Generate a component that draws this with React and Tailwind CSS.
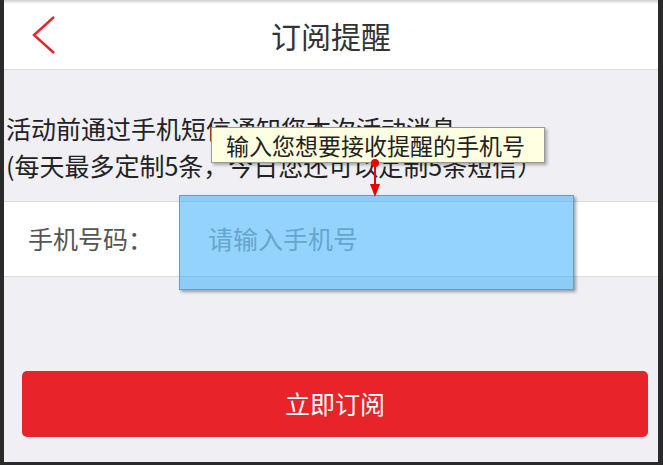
import React from 'react';

const cjk = { fontFamily: '"Noto Sans CJK SC", "Noto Sans", sans-serif' };

const App = () => {
  return (
    <div className="relative w-[663px] h-[465px] overflow-hidden bg-[#2a2a2a] pl-[4px] pr-[5px] pb-[3px]" style={cjk}>
      <div className="h-full flex flex-col bg-[#efeff4]">
        {/* header */}
        <div className="relative h-[70px] shrink-0 bg-white border-b border-[#dcdcdc] flex items-center">
          <div className="absolute top-0 left-0 right-0 h-[4px] bg-gradient-to-b from-[#cfcfcf] to-white" />
          <div className="w-[80px] pl-[27px] flex items-center">
            <svg width="26" height="40" viewBox="0 0 26 40">
              <path d="M23 2 L3 20 L23 38" fill="none" stroke="#e8232a" strokeWidth="2.4" />
            </svg>
          </div>
          <div className="flex-1 text-center text-[30px] text-[#333] leading-none">订阅提醒</div>
          <div className="w-[80px]" />
        </div>

        {/* notice */}
        <div className="pt-[40px] pl-[2px] text-[25px] leading-[37px] text-[#222] whitespace-nowrap">
          <div>活动前通过手机短信通知您本次活动消息</div>
          <div>(每天最多定制5条，今日您还可以定制5条短信）</div>
        </div>

        {/* phone row */}
        <div className="mt-[17px] h-[76px] shrink-0 bg-white border-y border-[#dcdcdc] flex items-center">
          <div className="w-[200px] pl-[24px] text-[25px] text-[#555]">手机号码：</div>
          <div className="pl-[4px] text-[25px] text-[#999]">请输入手机号</div>
        </div>

        {/* button */}
        <div className="mt-[94px] ml-[18px] w-[626px] h-[66px] rounded-[5px] bg-[#e8232a] flex items-center justify-center text-white text-[25px]">
          立即订阅
        </div>
      </div>

      {/* annotation overlay */}
      <div className="absolute left-[179px] top-[195px] w-[395px] h-[95px] bg-[rgba(60,175,250,0.55)] border border-[#6e9cbf] shadow-[2px_2px_3px_rgba(0,0,0,0.35)]" />
      <div className="absolute left-[374px] top-[165px] w-[2px] h-[22px] bg-[#e00]" />
      <div className="absolute left-[370px] top-[184px] w-0 h-0 border-l-[5px] border-r-[5px] border-t-[13px] border-l-transparent border-r-transparent border-t-[#e00]" />
      <div className="absolute left-[211px] top-[127px] w-[334px] h-[36px] bg-[#ffffe1] border border-[#9a9a9a] shadow-[2px_2px_3px_rgba(0,0,0,0.3)] flex items-center pl-[14px] text-[23px] text-[#222] whitespace-nowrap">
        输入您想要接收提醒的手机号
      </div>
      <div className="absolute left-[371px] top-[159px] w-[8px] h-[8px] rounded-full bg-[#e00]" />
    </div>
  );
};

export default App;
